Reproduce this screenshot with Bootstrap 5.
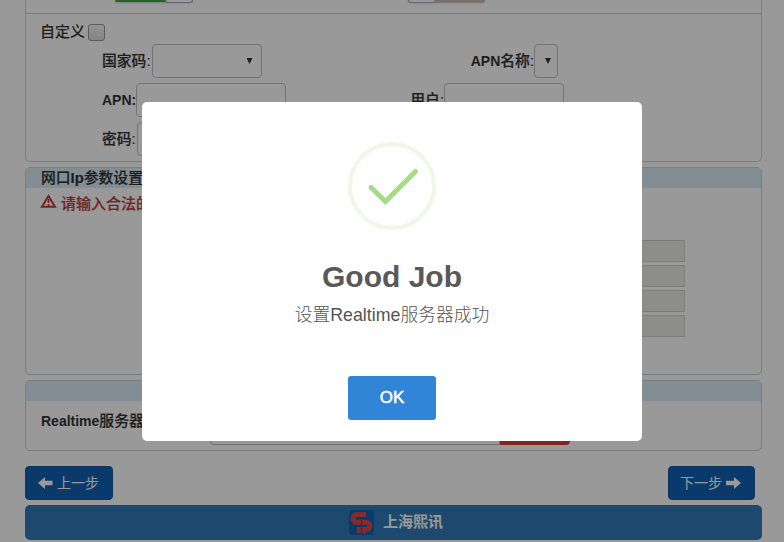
<!DOCTYPE html>
<html lang="zh-CN">
<head>
<meta charset="utf-8">
<meta name="viewport" content="width=device-width, initial-scale=1">
<title>Realtime</title>
<link href="https://cdn.jsdelivr.net/npm/bootstrap@5.3.0/dist/css/bootstrap.min.css" rel="stylesheet">
<style>
body{font:14px/20px "Liberation Sans","Noto Sans CJK SC",sans-serif;color:#333;background:#fff;height:542px;overflow:hidden}
.page{padding:0 22px 0 25px}
.panel-box{border:1px solid #d0d0d0;border-radius:5px;margin-bottom:5px;overflow:hidden}
.panel-params{height:162px;border-top:0;border-radius:0 0 5px 5px}
.panel-ip{height:208px}
.panel-server{height:71px;margin-bottom:15px}
.panel-title{height:20px;background:#d9edf7;padding:0 15px;font-size:14.8px;line-height:21px;font-weight:500;-webkit-text-stroke:.2px #333}
.switches{height:14px;border-bottom:1px solid #ccc}
.toggle{height:2px;border-radius:0 0 5px 5px}
.toggle-on{width:78px;margin-left:89px;background:#3ba53b;box-shadow:0 1px 2px #bcd}
.toggle-off{width:77px;margin-left:215px;background:#bbb;box-shadow:0 1px 2px #daa}
.knob{width:28px;height:3px;background:#fff;border:1px solid #aab;border-top:0;border-radius:0 0 4px 4px}
.custom-row{height:30px;padding:8px 0 0 14px}
.square{width:17px;height:17px;margin:2px 0 0 3px;border:1px solid #999;border-radius:3px;background:linear-gradient(#f5f5f5,#ddd)}
.field-row{height:34px;margin-bottom:5px;padding-left:76px}
.field-label{font-weight:700;white-space:nowrap;font-size:14px}
.zh{font-weight:500;font-size:15px}
.field-label .zh,.field-label.zh{font-weight:500;font-size:14.8px;-webkit-text-stroke:.2px #333}
.field-input{height:34px;border:1px solid #c0c0c0;border-radius:4px;background:#fff}
.w-country{width:110px;margin-left:1px}.w-name{width:24px}.w-apn{width:150px}.w-user{width:120px}
.w-pass{width:150px;margin-left:1px}
.w-name+.side-gap{width:203px}
.w-user+.side-gap{width:197px}
.arrow{width:6px;height:6px;background:#333;clip-path:polygon(0 0,100% 0,50% 100%)}
.warn{height:30px;padding:6px 0 0 14px;font-size:15px;color:#b9403e;font-weight:500;-webkit-text-stroke:.2px #b9403e}
.warn svg{margin:0 4px 0 0}
.ip-list{padding:22px 76px 0 0;gap:3px}
.ip-field{width:180px;height:22px;background:#ebebe4;border:1px solid #d0d0d0}
.server-row{padding:9px 0 0 15px}
.server-row .field-label{width:169px;line-height:22px}
.server-input{width:290px;height:35px;border:1px solid #bbb;border-radius:4px 0 0 4px}
.server-btn{width:70px;height:35px;background:#d9403c;border-radius:0 4px 4px 0}
.steps{padding-right:7px}
.step-btn{height:34px;padding:0 12px;font-size:14px;line-height:20px;font-weight:400;background:#1262b2;border:1px solid #165a9c;border-radius:4px;color:#fff}
.step-prev{width:88px}.step-next{width:87px;padding-left:11px}
.brand-bar{height:35px;margin-top:5px;border-radius:5px;background:#337ab7;color:#fff;font-size:15px;font-weight:700}
.brand-bar svg{margin:0 9px 0 5px}
.brand-bar span{margin-top:-2px}
.veil{position:fixed;inset:0;background:rgba(0,0,0,.4)}
.dialog-box{width:500px;height:339px;margin-top:102px;background:#fff;border-radius:5px;padding-top:40px}
.dialog-box h2{font-size:30px;line-height:36px;font-weight:700;color:#595959;margin:29px 0 0}
.dialog-box p{font-size:17.8px;line-height:22px;font-weight:300;color:#545454;margin:9px 0 0}
.ok-btn{width:88px;height:44px;margin-top:50px;border-radius:3px;background:#3085d6;border:0;color:#fff;font-size:17px;-webkit-text-stroke:.5px #fff}
</style>
<script src="https://cdn.jsdelivr.net/npm/bootstrap@5.3.0/dist/js/bootstrap.bundle.min.js"></script>
</head>
<body>
<main class="page">
  <section class="panel-box panel-params">
    <div class="switches d-flex align-items-start">
      <div class="toggle toggle-on d-flex justify-content-end"><span class="knob"></span></div>
      <div class="toggle toggle-off d-flex"><span class="knob"></span></div>
    </div>
    <div class="custom-row d-flex"><span class="zh">自定义</span><span class="square"></span></div>
    <div class="field-row d-flex align-items-center">
      <span class="field-label zh">国家码:</span><div class="field-input w-country d-flex align-items-center justify-content-end pe-1"><span class="arrow me-1"></span></div>
      <span class="field-label ms-auto">APN<span class="zh">名称:</span></span><div class="field-input w-name d-flex align-items-center justify-content-center"><span class="arrow ms-1"></span></div><span class="side-gap"></span>
    </div>
    <div class="field-row d-flex align-items-center">
      <span class="field-label">APN:</span><div class="field-input w-apn"></div>
      <span class="field-label zh ms-auto">用户:</span><div class="field-input w-user"></div><span class="side-gap"></span>
    </div>
    <div class="field-row d-flex align-items-center">
      <span class="field-label zh">密码:</span><div class="field-input w-pass"></div>
    </div>
  </section>
  <section class="panel-box panel-ip">
    <div class="panel-title">网口<b>Ip</b>参数设置</div>
    <div class="warn d-flex">
      <svg width="17" height="15" viewBox="0 0 17 15"><path d="M8.5 2 15 12.8H2Z" fill="none" stroke="currentColor" stroke-width="2"/><path d="M8.5 5v4M8.5 10v2" stroke="currentColor" stroke-width="1.7"/></svg>
      <span>请输入合法的IP地址</span>
    </div>
    <div class="ip-list d-flex flex-column align-items-end"><div class="ip-field"></div><div class="ip-field"></div><div class="ip-field"></div><div class="ip-field"></div></div>
  </section>
  <section class="panel-box panel-server">
    <div class="panel-title"></div>
    <div class="server-row d-flex align-items-start"><span class="field-label">Realtime<span class="zh">服务器地址:</span></span><div class="server-input"></div><div class="server-btn"></div></div>
  </section>
  <div class="d-flex justify-content-between steps">
    <button class="step-btn step-prev d-flex align-items-center"><svg width="15" height="12" viewBox="0 0 15 12" class="me-1"><path d="M0 6 7 0v3.7h7.5v4.6H7V12Z" fill="#fff"/></svg><span>上一步</span></button>
    <button class="step-btn step-next d-flex align-items-center"><span>下一步</span><svg width="15" height="12" viewBox="0 0 15 12" class="ms-1"><path d="M15 6 8 0v3.7H0v4.6h8V12Z" fill="#fff"/></svg></button>
  </div>
  <footer class="brand-bar d-flex align-items-center justify-content-center">
    <svg width="25" height="25" viewBox="0 0 25 25"><rect width="25" height="25" rx="4" fill="#1262b2"/><path d="M17 4.5H8a3.9 3.9 0 0 0 0 7.8h9a3.7 3.7 0 0 1 0 7.4h-2.5" fill="none" stroke="#dc4a4a" stroke-width="5"/><path d="M9.8 17v6.2M15 17v6.2" stroke="#dc4a4a" stroke-width="4"/><path d="M12.5 10v13M8 15.7h10" stroke="#1262b2" stroke-width="1"/></svg>
    <span>上海熙讯</span>
  </footer>
</main>
<div class="veil d-flex justify-content-center align-items-start">
  <div class="dialog-box d-flex flex-column align-items-center" role="dialog">
    <svg width="88" height="88" viewBox="0 0 88 88"><circle cx="44" cy="44" r="42" fill="none" stroke="#edf8e7" stroke-width="4"/><path d="M23 45.5 37.5 59.5 67.5 29.5" fill="none" stroke="#a5dc86" stroke-width="5" stroke-linecap="round"/></svg>
    <h2>Good Job</h2>
    <p>设置Realtime服务器成功</p>
    <button class="ok-btn">OK</button>
  </div>
</div>
</body>
</html>
